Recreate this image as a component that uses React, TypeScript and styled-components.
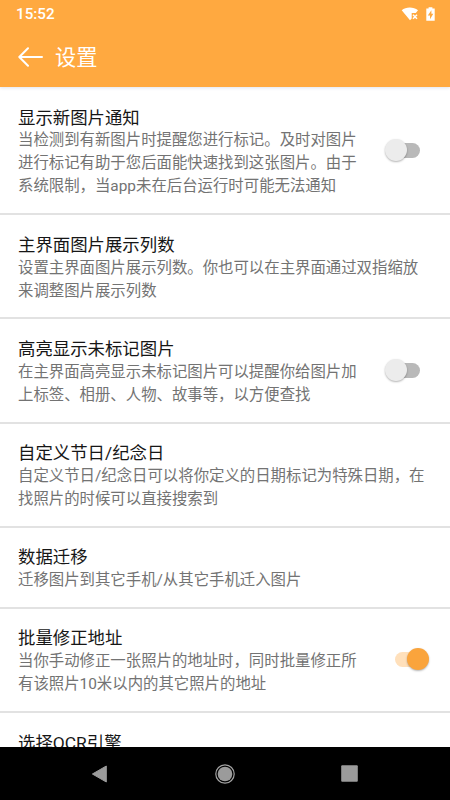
import React from 'react';
import styled, { createGlobalStyle } from 'styled-components';

const GlobalStyle = createGlobalStyle`
  * { box-sizing: border-box; }
  body { margin: 0; background: #fff; }
`;

const Screen = styled.div`
  display: flex;
  flex-direction: column;
  width: 450px;
  height: 800px;
  overflow: hidden;
  background: #fff;
  font-family: Roboto, 'Noto Sans CJK SC', sans-serif;
`;

const Header = styled.header`
  flex: none;
  height: 87px;
  background: #ffa940;
  color: #fff;
  box-shadow: 0 1px 3px rgba(60, 90, 150, 0.16);
`;

const StatusBar = styled.div`
  display: flex;
  align-items: center;
  height: 28px;
  padding: 0 15px 0 16px;
`;

const Clock = styled.span`
  flex: 1;
  font-size: 15.2px;
  font-weight: 500;
  line-height: 28px;
`;

const StatusIcons = styled.div`
  display: flex;
  align-items: center;
  gap: 7px;
  svg { display: block; }
`;

const TitleBar = styled.div`
  display: flex;
  align-items: center;
  height: 58px;
  padding-left: 18px;
  gap: 11px;
`;

const PageTitle = styled.h1`
  margin: 0;
  padding-top: 2px;
  font-size: 21.2px;
  font-weight: 400;
  line-height: 30px;
`;

const List = styled.main`
  flex: 1;
  min-height: 0;
  padding-top: 1px;
  overflow: hidden;
`;

const Row = styled.section`
  display: flex;
  align-items: center;
  justify-content: space-between;
  padding: 18.6px 22px 14.7px 18px;
  border-bottom: 2px solid #e2e2e2;
`;

const RowText = styled.div`
  flex: none;
  white-space: nowrap;
`;

const RowTitle = styled.h2`
  margin: 0;
  height: 22.9px;
  font-size: 17.4px;
  font-weight: 400;
  line-height: 22.9px;
  color: #161616;
`;

const Line = styled.div`
  height: 23px;
  font-size: 15.4px;
  line-height: 23px;
  color: #737373;
`;

const Switch = styled.div<{ $on: boolean }>`
  position: relative;
  flex: none;
  width: 35px;
  height: 24px;
  margin-bottom: 4px;
  margin-right: ${p => (p.$on ? -0.5 : 8.5)}px;
  &::before {
    content: '';
    position: absolute;
    left: ${p => (p.$on ? 1 : 8)}px;
    top: 4.5px;
    width: 27px;
    height: 15px;
    border-radius: 8px;
    background: ${p => (p.$on ? '#ffe0bb' : '#b9b9b9')};
  }
  &::after {
    content: '';
    position: absolute;
    left: ${p => (p.$on ? 13 : 0.5)}px;
    top: 0.5px;
    width: 22px;
    height: 22px;
    border-radius: 50%;
    background: ${p => (p.$on ? '#faa43c' : '#ececec')};
    box-shadow: 0 1px 2px rgba(0, 0, 0, 0.3);
  }
`;

const NavBar = styled.nav`
  flex: none;
  display: flex;
  align-items: center;
  justify-content: space-between;
  height: 53px;
  padding: 0 92px 0 91px;
  background: #000;
  svg { display: block; }
`;

type Item = { title: string; lines: string[]; on?: boolean };

const items: Item[] = [
  {
    title: '显示新图片通知',
    lines: [
      '当检测到有新图片时提醒您进行标记。及时对图片',
      '进行标记有助于您后面能快速找到这张图片。由于',
      '系统限制，当app未在后台运行时可能无法通知',
    ],
    on: false,
  },
  {
    title: '主界面图片展示列数',
    lines: ['设置主界面图片展示列数。你也可以在主界面通过双指缩放', '来调整图片展示列数'],
  },
  {
    title: '高亮显示未标记图片',
    lines: ['在主界面高亮显示未标记图片可以提醒你给图片加', '上标签、相册、人物、故事等，以方便查找'],
    on: false,
  },
  {
    title: '自定义节日/纪念日',
    lines: ['自定义节日/纪念日可以将你定义的日期标记为特殊日期，在', '找照片的时候可以直接搜索到'],
  },
  { title: '数据迁移', lines: ['迁移图片到其它手机/从其它手机迁入图片'] },
  {
    title: '批量修正地址',
    lines: ['当你手动修正一张照片的地址时，同时批量修正所', '有该照片10米以内的其它照片的地址'],
    on: true,
  },
  { title: '选择OCR引擎', lines: [] },
];

export default function App() {
  return (
    <Screen>
      <GlobalStyle />
      <Header>
        <StatusBar>
          <Clock>15:52</Clock>
          <StatusIcons>
            <svg width="18" height="14" viewBox="0 0 18 14">
              <path d="M0.7 3.2C5 -0.3 12.5 -0.3 17 3.2L14.8 6H10.7V11.4L9 13.2Z" fill="#fff" />
              <path d="M12 7.8L16 11.8M16 7.8L12 11.8" stroke="#fff" strokeWidth="1.5" />
            </svg>
            <svg width="9" height="14" viewBox="0 0 9 14">
              <path d="M2.6 0.3H6.4V1.6H8.7V13.7H0.3V1.6H2.6Z" fill="#fff" />
              <path d="M5.4 3.2L1.8 8.4H4V12.2L7.3 6.8H5.4Z" fill="#ffa940" />
            </svg>
          </StatusIcons>
        </StatusBar>
        <TitleBar>
          <svg width="26" height="20" viewBox="0 0 26 20" fill="none" stroke="#fff" strokeWidth="2" strokeLinecap="round" strokeLinejoin="round">
            <path d="M24 10H1.5M10 1.2L1.3 10L10 18.8" />
          </svg>
          <PageTitle>设置</PageTitle>
        </TitleBar>
      </Header>
      <List>
        {items.map(item => (
          <Row key={item.title}>
            <RowText>
              <RowTitle>{item.title}</RowTitle>
              {item.lines.map(line => (
                <Line key={line}>{line}</Line>
              ))}
            </RowText>
            {item.on !== undefined && <Switch $on={item.on} />}
          </Row>
        ))}
      </List>
      <NavBar>
        <svg width="17" height="18" viewBox="0 0 17 18">
          <path d="M15.3 1V17L1.4 9Z" fill="#9b9b9b" stroke="#9b9b9b" strokeLinejoin="round" />
        </svg>
        <svg width="20" height="20" viewBox="0 0 20 20">
          <circle cx="10" cy="10" r="9.2" fill="none" stroke="#a2a2a2" strokeWidth="1.2" />
          <circle cx="10" cy="10" r="7.3" fill="#9b9b9b" />
        </svg>
        <svg width="17" height="17" viewBox="0 0 17 17">
          <rect x="0.2" y="0.2" width="16.6" height="16.6" rx="1" fill="#9b9b9b" />
        </svg>
      </NavBar>
    </Screen>
  );
}
